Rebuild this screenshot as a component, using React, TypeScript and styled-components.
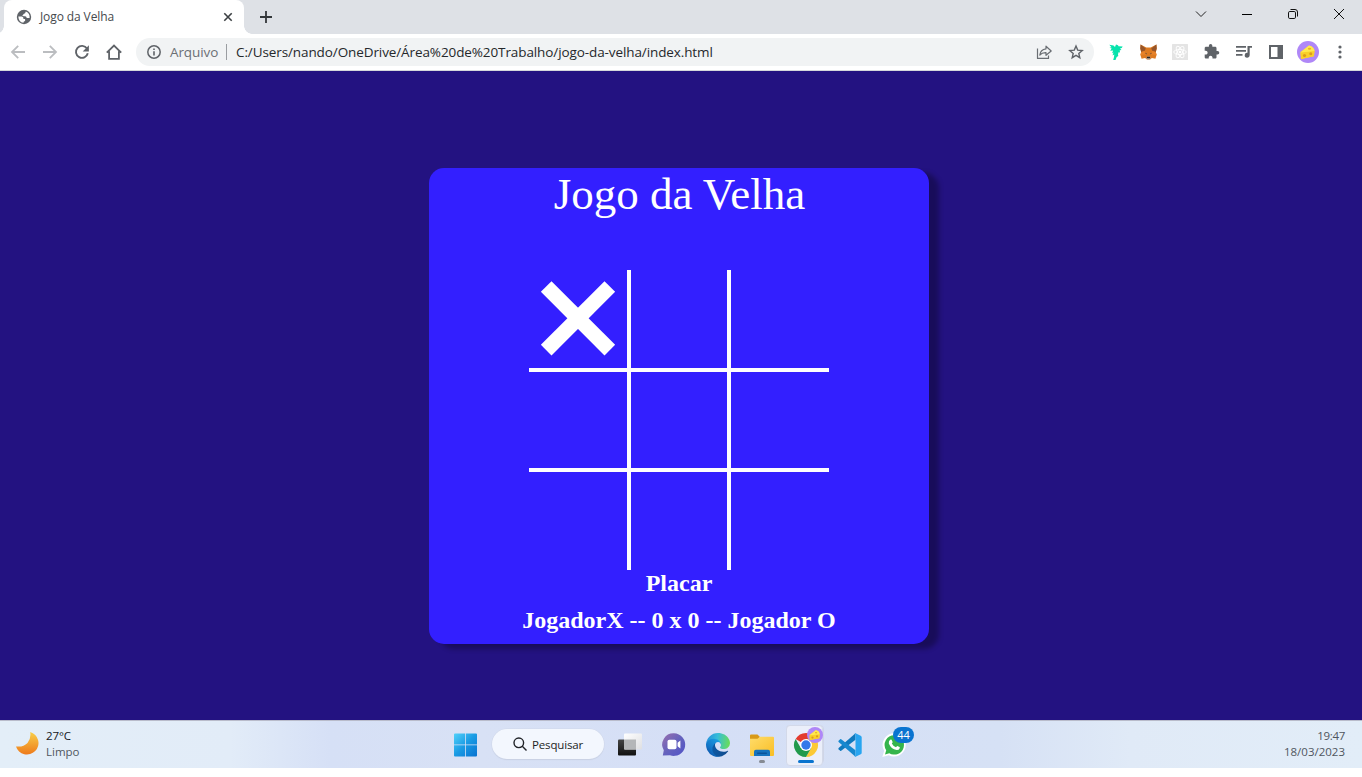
import React from "react";
import styled, { createGlobalStyle } from "styled-components";

const GlobalStyle = createGlobalStyle`
  * { box-sizing: border-box; }
  html, body { margin: 0; padding: 0; background: #fff; overflow: hidden; }
  svg { display: block; flex: none; overflow: visible; }
`;

const uiFont = `"Open Sans", "Noto Sans", sans-serif`;

const Screen = styled.div`
  width: 1362px;
  height: 777px;
  display: flex;
  flex-direction: column;
  background: #fff;
  font-family: ${uiFont};
`;

const TabStrip = styled.header`
  height: 34px;
  display: flex;
  background: #dee1e6;
  padding-left: 4px;
`;

const Tab = styled.div`
  position: relative;
  width: 240px;
  height: 34px;
  display: flex;
  align-items: center;
  padding: 0 9px 0 12px;
  background: #fff;
  border-radius: 8px 8px 0 0;
  &::before, &::after {
    content: "";
    position: absolute;
    bottom: 0;
    width: 8px;
    height: 8px;
  }
  &::before { left: -8px; background: radial-gradient(circle at 0 0, #dee1e6 7.5px, #fff 8px); }
  &::after { right: -8px; background: radial-gradient(circle at 100% 0, #dee1e6 7.5px, #fff 8px); }
`;

const TabTitle = styled.span`
  flex: 1;
  margin-left: 8px;
  font-size: 12px;
  line-height: 16px;
  letter-spacing: -0.1px;
  color: #45494d;
  white-space: nowrap;
`;

const NewTab = styled.div`
  width: 44px;
  display: flex;
  align-items: center;
  justify-content: center;
`;

const WindowButtons = styled.div`
  display: flex;
  margin-left: auto;
  height: 28px;
`;

const WindowButton = styled.div`
  width: 46px;
  display: flex;
  align-items: center;
  justify-content: center;
`;

const Toolbar = styled.div`
  height: 37px;
  display: flex;
  align-items: center;
  padding: 0 6px 0 2px;
  background: #fff;
  border-bottom: 1px solid #d5d7db;
`;

const Slot = styled.div`
  width: 32px;
  height: 32px;
  flex: none;
  display: flex;
  align-items: center;
  justify-content: center;
`;

const AddressBar = styled.div`
  flex: 1;
  height: 28px;
  margin: 0 6px;
  padding: 0 2px;
  border-radius: 14px;
  background: #f1f3f4;
  display: flex;
  align-items: center;
`;

const Scheme = styled.span`
  width: 48px;
  font-size: 13.5px;
  line-height: 20px;
  letter-spacing: -0.1px;
  color: #6b6f74;
  white-space: nowrap;
`;

const SchemeDivider = styled.i`
  width: 1px;
  height: 16px;
  margin: 0 9px 0 8px;
  background: #9a9da1;
`;

const Url = styled.span`
  flex: 1;
  font-size: 13.5px;
  line-height: 20px;
  letter-spacing: -0.1px;
  color: #25282b;
  white-space: nowrap;
`;

const Page = styled.main`
  height: 649px;
  display: flex;
  justify-content: center;
  align-items: flex-start;
  padding: 97px 4px 0 0;
  background: #231281;
`;

const Card = styled.section`
  width: 500px;
  height: 476px;
  display: flex;
  flex-direction: column;
  align-items: center;
  border-radius: 15px;
  background: #331fff;
  box-shadow: 10px 5px 5px rgba(0, 0, 0, 0.3);
  color: #fff;
  font-family: "Liberation Serif", serif;
`;

const Title = styled.h1`
  margin: 0 0 50px;
  padding-left: 1px;
  font-size: 45px;
  line-height: 52px;
  font-weight: 400;
`;

const Board = styled.div`
  display: grid;
  grid-template-columns: repeat(3, 100px);
  grid-template-rows: repeat(3, 100px);
`;

const Cell = styled.div<{ $index: number }>`
  display: flex;
  align-items: center;
  justify-content: center;
  border: 0 solid #fff;
  border-left-width: ${(p) => (p.$index % 3 > 0 ? 2 : 0)}px;
  border-right-width: ${(p) => (p.$index % 3 < 2 ? 2 : 0)}px;
  border-top-width: ${(p) => (p.$index > 2 ? 2 : 0)}px;
  border-bottom-width: ${(p) => (p.$index < 6 ? 2 : 0)}px;
`;

const Score = styled.p<{ $gap?: number }>`
  margin: ${(p) => p.$gap ?? 0}px 0 0;
  font-size: 24px;
  line-height: 27px;
  font-weight: 700;
  white-space: pre;
`;

const Taskbar = styled.footer`
  height: 48px;
  display: flex;
  align-items: stretch;
  border-top: 1px solid #b9bccb;
  background: linear-gradient(90deg, #e3eef8 0, #e2ecf8 230px, #d6e0f6 330px, #d8e1f5 480px, #d5dff6 700px, #d6e1f5 1000px, #e0eaf7 1130px, #e2edf8 100%);
`;

const Weather = styled.div`
  width: 443px;
  display: flex;
  padding: 7px 0 0 15px;
  gap: 7px;
`;

const SmallLine = styled.div<{ $color?: string; $spacing?: number }>`
  font-size: 11.5px;
  line-height: 16px;
  letter-spacing: ${(p) => p.$spacing ?? 0}px;
  color: ${(p) => p.$color ?? "#50565e"};
  white-space: nowrap;
`;

const AppSlot = styled.div`
  position: relative;
  width: 44px;
  display: flex;
  align-items: center;
  justify-content: center;
`;

const SearchPill = styled.div`
  width: 112px;
  height: 30px;
  margin: 8px 4px 0 5px;
  padding-left: 21px;
  display: flex;
  align-items: center;
  gap: 5px;
  border-radius: 15px;
  background: #f3f7fe;
  box-shadow: 0 0 0 0.5px #d0d8ea, 0 1px 1px #c3cbdf;
  font-size: 11.5px;
  letter-spacing: -0.15px;
  color: #1c1f24;
`;

const ActiveBack = styled.i`
  position: absolute;
  left: 2px;
  top: 4px;
  width: 38px;
  height: 39px;
  border-radius: 4px;
  background: #e0e6f6;
  border: 1px solid #cfd5e6;
  &::after {
    content: "";
    position: absolute;
    left: -1px;
    top: -1px;
    width: 35px;
    height: 39px;
    border-radius: 4px;
    background: #ebeffa;
    border: 1px solid #d3d9e9;
  }
`;

const Indicator = styled.i<{ $w: number; $color: string }>`
  position: absolute;
  bottom: 5px;
  left: ${(p) => (44 - p.$w) / 2}px;
  width: ${(p) => p.$w}px;
  height: 3px;
  border-radius: 2px;
  background: ${(p) => p.$color};
`;

const IconLayer = styled.div`
  position: relative;
`;

const ProfileBadge = styled.div`
  position: absolute;
  right: 5px;
  top: 6px;
`;

const CountBadge = styled.div`
  position: absolute;
  left: 21px;
  top: 6px;
  width: 21px;
  height: 16px;
  border-radius: 8px;
  background: #0a74d0;
  color: #fff;
  font-size: 11px;
  line-height: 16px;
  text-align: center;
`;

const Clock = styled.div`
  margin-left: auto;
  padding: 7px 17px 0 0;
  text-align: right;
`;

const Cheese = ({ size }: { size: number }) => (
  <svg width={size} height={size} viewBox="0 0 22 22">
    <circle cx="11" cy="11" r="11" fill="#af87f7" />
    <path d="M3.5 11 12 4.500q5 1 5.500 5.500l-.6 5.300-12.900 2.700z" fill="#fdd835" />
    <path d="m3.500 11.500 14-1.500-.6 5.300-12.900 2.700z" fill="#f9cf2a" />
    <path d="M3.500 11.500 12 4.500q5 1 5.500 5.500z" fill="#ffe94e" />
    <circle cx="7.500" cy="14.500" r="1.600" fill="#dd9c1c" />
    <circle cx="13.800" cy="12.800" r="1.500" fill="#dd9c1c" />
    <ellipse cx="12.500" cy="7.800" rx="1.600" ry="1" fill="#e9b321" />
  </svg>
);

const Globe = () => (
  <svg width="16" height="16" viewBox="0 0 16 16">
    <circle cx="8" cy="8" r="7.200" fill="#5f6368" />
    <path d="M2.300 7.400h3.400q1.700 0 1.700 1.700v.8h1.700v2.200q-1.600.2-1.700 1.700-4.700-.7-5.100-6.400z" fill="#fff" />
    <path d="M9.800 2.500q-.2 2.300-2.300 2.400-.2 1.700-1.500 1.700.6 1 3.200.7 1.400.1 1.500 1.700h2.900q.5-4.700-3.800-6.500z" fill="#fff" />
  </svg>
);

const Fox = () => (
  <svg width="17" height="16" viewBox="0 0 17 16">
    <path d="m.6.400 5.700 3h4.400l5.700-3 .3 4.200-.9 3.400.8 3-1.200 3.800-3.500-.9-1.900 1.600H7l-1.900-1.600-3.500.9L.4 11l.8-3L.3 4.600z" fill="#dd7a20" />
    <path d="m.6.400 5.200 4L4.500 7 1.200 8 .3 4.600zM16.400.400l-5.200 4L12.500 7l3.300 1 .9-3.400z" fill="#96552a" />
    <path d="m1.200 8 3.300-1 1.800 3.500L.4 11zM15.800 8l-3.300-1-1.800 3.500 5.900.5z" fill="#e8832a" />
    <path d="m4.800 8.800 1.700.4.200 1.300zM12.200 8.800l-1.700.4-.2 1.300z" fill="#4a4038" />
    <path d="M6.800 12.500h3.400l.3 2.400-.6.600H7.100l-.6-.6z" fill="#b9a79a" />
    <path d="M7 12.700h3l.2 1.500H6.800z" fill="#2b2522" />
  </svg>
);

const BackIcon = ({ flip = false }: { flip?: boolean }) => (
  <svg width="16" height="16" viewBox="0 0 16 16" fill="none" stroke="#bbbdc0" strokeWidth="1.800">
    <path d={flip ? "M1 8h12.500M7.800 1.800 14 8l-6.200 6.200" : "M15 8H2.500M8.200 1.800 2 8l6.200 6.200"} />
  </svg>
);

const XMark = () => (
  <svg width="74" height="74" viewBox="-37 -37 74 74" fill="#fff">
    <g transform="translate(0 -.700) rotate(45)">
      <rect x="-45" y="-7.500" width="90" height="15" />
      <rect x="-7.500" y="-45" width="15" height="90" />
    </g>
  </svg>
);

const WindowsLogo = () => (
  <svg width="24" height="24" viewBox="0 0 24 24">
    <defs>
      <linearGradient id="win" x1="0" y1="0" x2="24" y2="24" gradientUnits="userSpaceOnUse">
        <stop offset="0" stopColor="#55d4fb" />
        <stop offset=".5" stopColor="#1a9be4" />
        <stop offset="1" stopColor="#0871d0" />
      </linearGradient>
    </defs>
    <path d="M2 .500H12v11H1v-10q0-1 1-1zM12.800.500H23q1 0 1 1v10H12.800zM1 12.300H12v11.200H2q-1 0-1-1zM12.800 12.300H24v10.200q0 1-1 1H12.800z" fill="url(#win)" />
  </svg>
);

const TaskView = () => (
  <svg width="24" height="24" viewBox="0 0 24 24">
    <defs>
      <linearGradient id="tvd" x1="0" y1="0" x2="0" y2="1"><stop stopColor="#444" /><stop offset="1" stopColor="#111" /></linearGradient>
      <linearGradient id="tvl" x1="0" y1="0" x2="1" y2="1"><stop stopColor="#fff" /><stop offset="1" stopColor="#dedfe2" /></linearGradient>
    </defs>
    <rect x="0" y="6.500" width="18" height="16" rx="1" fill="url(#tvd)" />
    <rect x="6" y=".5" width="18" height="16" rx="1" fill="url(#tvl)" />
    <path d="M6 6.500h12v10H7q-1 0-1-1z" fill="#b4b6b8" />
  </svg>
);

const ChatIcon = () => (
  <svg width="24" height="24" viewBox="0 0 24 24">
    <defs>
      <linearGradient id="chat" x1="0" y1="0" x2="1" y2="1"><stop stopColor="#9a6fae" /><stop offset=".5" stopColor="#6563bd" /><stop offset="1" stopColor="#5153c8" /></linearGradient>
    </defs>
    <path d="M12 .300a11.300 11.300 0 1 1-4 21.900L.8 22.500l1-5.200A11.300 11.300 0 0 1 12 .300z" fill="url(#chat)" />
    <rect x="5.500" y="6.700" width="9" height="9.500" rx="1.800" fill="#fff" />
    <path d="m15.600 9.800 2.800-2.300v8l-2.800-2.300z" fill="#fff" />
  </svg>
);

const EdgeIcon = () => (
  <svg width="24" height="24" viewBox="0 0 256 256">
    <defs>
      <linearGradient id="e1" x1="63" x2="241" y1="178" y2="178" gradientUnits="userSpaceOnUse"><stop stopColor="#0c59a4" /><stop offset="1" stopColor="#114a8b" /></linearGradient>
      <linearGradient id="e2" x1="157" x2="46" y1="100" y2="220" gradientUnits="userSpaceOnUse"><stop stopColor="#1b9de2" /><stop offset=".7" stopColor="#1276c8" /><stop offset="1" stopColor="#0f5fb4" /></linearGradient>
      <linearGradient id="e3" x1="10" x2="250" y1="50" y2="90" gradientUnits="userSpaceOnUse"><stop stopColor="#2793dc" /><stop offset=".45" stopColor="#36bdd9" /><stop offset="1" stopColor="#68dc5b" /></linearGradient>
    </defs>
    <path d="M231 190a94 94 0 0 1-10.500 4.700 102 102 0 0 1-36 6.500c-47.500 0-88.800-32.700-88.800-74.600a31.500 31.500 0 0 1 16.500-27.300c-43 1.800-54 46.500-54 72.700 0 74.100 68.300 81.600 83 81.600 8 0 20-2.300 27-4.600l1.400-.4a128 128 0 0 0 66.600-52.800 4 4 0 0 0-5.200-5.800z" fill="url(#e1)" />
    <path d="M105.700 241.400a79 79 0 0 1-22.700-21.300 80.700 80.700 0 0 1 29.200-120.800c3.100-1.500 8.500-4.100 15.600-4a32.400 32.400 0 0 1 25.700 13 31.900 31.900 0 0 1 6.300 18.700c0-.2 24.500-79.600-80-79.600C36 47.400 0 89.100 0 125.600a130 130 0 0 0 12.100 56 128 128 0 0 0 156.400 67.100 75.500 75.500 0 0 1-62.800-7.300z" fill="url(#e2)" />
    <path d="M152.300 148.900c-.8 1-3.300 2.500-3.300 5.700 0 2.600 1.700 5.200 4.800 7.300 14.400 10.100 41.700 8.700 41.800 8.700a60 60 0 0 0 30.500-8.400A61.800 61.800 0 0 0 256 109.500c.3-22.400-8-37.300-11.300-43.900C223.500 24.100 177.700.3 128 .3A128 128 0 0 0 0 126.500c.5-36.500 36.800-66 80-66 3.500 0 23.500.3 42 10a72.600 72.600 0 0 1 30.900 29.300c6.100 10.600 7.200 24.100 7.200 29.500s-2.700 13.300-7.800 19.600z" fill="url(#e3)" />
  </svg>
);

const FolderIcon = () => (
  <svg width="26" height="24" viewBox="0 0 26 24">
    <defs>
      <linearGradient id="fold" x1="0" y1="0" x2="1" y2="1"><stop stopColor="#ffdc6a" /><stop offset="1" stopColor="#f9be25" /></linearGradient>
    </defs>
    <path d="M1 2.500q0-1 1-1h6.500l2.500 2.500h-.5v4H1z" fill="#d99a17" />
    <path d="M1 5.800h7.500L11 3.800h13q1 0 1 1V22q0 1-1 1H2q-1 0-1-1z" fill="url(#fold)" />
    <path d="M5 23v-4.500q0-1.800 1.800-1.800h12.400q1.800 0 1.800 1.800V23z" fill="#1673be" />
    <rect x="8" y="19.500" width="10" height="1.500" rx=".7" fill="#0b549a" />
  </svg>
);

const ChromeIcon = () => (
  <svg width="24" height="24" viewBox="0 0 24 24">
    <path d="M12 12 1.600 6A12 12 0 0 1 22.400 6H12z" fill="#e33b2e" />
    <path d="M12 6h10.400A12 12 0 0 1 12 24l5.200-9z" fill="#fcc934" />
    <path d="M1.600 6A12 12 0 0 0 12 24l5.200-9H6.800z" fill="#229a4c" />
    <circle cx="12" cy="12" r="6" fill="#fff" />
    <circle cx="12" cy="12" r="4.700" fill="#3478ea" />
  </svg>
);

const CodeIcon = () => (
  <svg width="24" height="24" viewBox="0 0 24 24">
    <path d="M17.500.300v6.500L3.200 17.700q-.6.400-1.100 0l-1.500-1.400q-.6-.6 0-1.200z" fill="#1079bd" />
    <path d="M17.500 23.700v-6.500L3.200 6.300q-.6-.4-1.100 0L.600 7.700q-.6.600 0 1.200z" fill="#1688cf" />
    <path d="m17.500.300 5.200 2.400q1 .5 1 1.500v15.600q0 1-1 1.500l-5.200 2.400q-.9.300-1.500-.4 1.200.8 1.500-1V1.700q-.3-1.800-1.500-1 .600-.700 1.500-.400z" fill="#28a5f0" />
  </svg>
);

const WhatsAppIcon = () => (
  <svg width="24" height="24" viewBox="0 0 24 24">
    <path d="M12.300.300a11.600 11.600 0 1 1-5.500 21.900L.300 24l1.900-6.300A11.600 11.600 0 0 1 12.300.300z" fill="#fff" />
    <path d="M12.300 2.200a9.700 9.700 0 1 1-5 18L3 21.400l1.200-4.200a9.700 9.700 0 0 1 8.100-15z" fill="#36b54c" />
    <path d="M8.600 6.500q.7-.3 1 .2l1 2.200q.1.600-.8 1.500 1.500 2.800 4.200 3.800.8-1 1.200-1.300l2.400 1.100q.4.300.1 1.200-.8 2-3 1.900-5.700-1-7.900-6.500-.4-3 1.800-4.100z" fill="#fff" />
  </svg>
);

export default function App() {
  return (
    <Screen>
      <GlobalStyle />
      <TabStrip>
        <Tab>
          <Globe />
          <TabTitle>Jogo da Velha</TabTitle>
          <svg width="14" height="15" viewBox="0 0 14 15" stroke="#3c4043" strokeWidth="1.600">
            <path d="m3.300 3.300 7.400 7.400m0-7.400-7.400 7.400" />
          </svg>
        </Tab>
        <NewTab>
          <svg width="12" height="12" viewBox="0 0 12 12" stroke="#33373a" strokeWidth="1.800">
            <path d="M6 0v12M0 6h12" />
          </svg>
        </NewTab>
        <WindowButtons>
          <WindowButton>
            <svg width="10" height="6" viewBox="0 0 10 6" fill="none" stroke="#222"><path d="m0 .500 5 5 5-5" /></svg>
          </WindowButton>
          <WindowButton>
            <svg width="10" height="1" viewBox="0 0 10 1"><rect width="10" height="1" fill="#000" /></svg>
          </WindowButton>
          <WindowButton>
            <svg width="10" height="10" viewBox="0 0 10 10" fill="none" stroke="#111">
              <rect x=".5" y="2.500" width="7" height="7" rx="1.300" />
              <path d="M2.500.500H7q2.500 0 2.500 2.500v4.500" />
            </svg>
          </WindowButton>
          <WindowButton>
            <svg width="10" height="10" viewBox="0 0 10 10" stroke="#111"><path d="m0 0 10 10M10 0 0 10" /></svg>
          </WindowButton>
        </WindowButtons>
      </TabStrip>

      <Toolbar>
        <Slot><BackIcon /></Slot>
        <Slot><BackIcon flip /></Slot>
        <Slot>
          <svg width="16" height="16" viewBox="0 0 16 16">
            <path d="M13 4.600A6 6 0 1 0 13.800 9.300" fill="none" stroke="#5f6368" strokeWidth="1.900" />
            <path d="M14.900 1.200v6.200H8.700z" fill="#5f6368" />
          </svg>
        </Slot>
        <Slot>
          <svg width="18" height="18" viewBox="0 0 18 18" fill="none" stroke="#5f6368" strokeWidth="1.800">
            <path d="M1.800 9.700 9 2.500l7.200 7.200M4.100 8.200v7.700h9.800V8.200" />
          </svg>
        </Slot>
        <AddressBar>
          <Slot>
            <svg width="14" height="14" viewBox="0 0 14 14">
              <circle cx="7" cy="7" r="6.200" fill="none" stroke="#5f6368" strokeWidth="1.500" />
              <path d="M6.200 6.200h1.600v4.300H6.200zM6.200 3.500h1.600v1.500H6.200z" fill="#5f6368" />
            </svg>
          </Slot>
          <Scheme>Arquivo</Scheme>
          <SchemeDivider />
          <Url>C:/Users/nando/OneDrive/Área%20de%20Trabalho/jogo-da-velha/index.html</Url>
          <Slot>
            <svg width="16" height="16" viewBox="0 0 16 16" fill="none" stroke="#6a6e73" strokeWidth="1.200" strokeLinejoin="round">
              <path d="M1.500 4.500V14.400h11v-3" />
              <path d="M10 2.200 15.200 7 10 11.300V8.700Q6 8.500 3.800 11 4.500 5.300 10 4.800z" />
            </svg>
          </Slot>
          <Slot>
            <svg width="16" height="16" viewBox="0 0 16 16" fill="none" stroke="#5f6368" strokeWidth="1.400">
              <path d="m8 2 1.700 4.100 4.500.4-3.400 2.900 1 4.300L8 11.400l-3.800 2.300 1-4.300-3.400-2.900 4.500-.4z" />
            </svg>
          </Slot>
        </AddressBar>
        <Slot>
          <svg width="16" height="16" viewBox="0 0 16 16" fill="#06e3ac">
            <path d="M1.300.700 5.500 1.500 7 3 8 .500l2 .8.5 1 4.200.2-1 1.500-1.700.4 1.500 1.600-1.800.3.300 2.200-1.500-.2-.5 2.200.3 1.500-1.600 1-1.200 3H5.200l.8-3 .3-2.500-1.800 1 1-3-1.500.8 1.200-2.800-3 .3 1.500-2.300-2.200-.7 2-.6z" />
          </svg>
        </Slot>
        <Slot><Fox /></Slot>
        <Slot>
          <svg width="16" height="16" viewBox="0 0 16 16">
            <rect width="16" height="16" rx=".5" fill="#e4e4e4" />
            <g fill="none" stroke="#fff" strokeWidth=".9">
              <ellipse cx="8" cy="8" rx="6.300" ry="2.500" />
              <ellipse cx="8" cy="8" rx="6.300" ry="2.500" transform="rotate(60 8 8)" />
              <ellipse cx="8" cy="8" rx="6.300" ry="2.500" transform="rotate(120 8 8)" />
            </g>
            <circle cx="8" cy="8" r="1.300" fill="#fff" />
          </svg>
        </Slot>
        <Slot>
          <svg width="16" height="16" viewBox="1 1 23 23" fill="#5f6368">
            <path d="M20.500 11H19V7c0-1.100-.9-2-2-2h-4V3.500a2.500 2.500 0 0 0-5 0V5H4c-1.100 0-1.990.9-1.990 2v3.800H3.500c1.490 0 2.700 1.210 2.700 2.700s-1.210 2.700-2.700 2.700H2V20c0 1.100.9 2 2 2h3.800v-1.500c0-1.490 1.210-2.700 2.700-2.700 1.490 0 2.700 1.210 2.700 2.700V22H17c1.100 0 2-.9 2-2v-4h1.500a2.500 2.500 0 0 0 0-5z" />
          </svg>
        </Slot>
        <Slot>
          <svg width="16" height="14" viewBox="0 0 16 14" fill="#5f6368">
            <path d="M0 1h10v1.700H0zM0 5h10v1.700H0zM0 9h6.500v1.700H0zM11.500 1H16v1.800h-2.300v7.500a2.500 2.500 0 1 1-2.200-2.500z" />
          </svg>
        </Slot>
        <Slot>
          <svg width="14" height="14" viewBox="0 0 14 14">
            <path d="M0 0h14v14H0zM2 2v10h6.500V2z" fill="#5f6368" fillRule="evenodd" />
          </svg>
        </Slot>
        <Slot><Cheese size={22} /></Slot>
        <Slot>
          <svg width="4" height="14" viewBox="0 0 4 14" fill="#5f6368">
            <circle cx="2" cy="2" r="1.600" /><circle cx="2" cy="7" r="1.600" /><circle cx="2" cy="12" r="1.600" />
          </svg>
        </Slot>
      </Toolbar>

      <Page>
        <Card>
          <Title>Jogo da Velha</Title>
          <Board>
            {Array.from({ length: 9 }, (_, i) => (
              <Cell key={i} $index={i}>{i === 0 && <XMark />}</Cell>
            ))}
          </Board>
          <Score>Placar</Score>
          <Score $gap={10}>JogadorX -- 0 x 0 -- Jogador O</Score>
        </Card>
      </Page>

      <Taskbar>
        <Weather>
          <svg width="24" height="26" viewBox="0 0 24 26">
            <defs>
              <linearGradient id="moon" x1="0" y1="0" x2="0" y2="1"><stop stopColor="#f8cf4a" /><stop offset="1" stopColor="#ee7a1b" /></linearGradient>
            </defs>
            <path d="M15.200 4A11.500 11.500 0 1 1 1 18.400Q8 19.500 12.500 15 16.300 10.500 15.200 4z" fill="url(#moon)" />
          </svg>
          <div>
            <SmallLine $color="#15181c" $spacing={-0.1}>27°C</SmallLine>
            <SmallLine>Limpo</SmallLine>
          </div>
        </Weather>
        <AppSlot><WindowsLogo /></AppSlot>
        <SearchPill>
          <svg width="14" height="14" viewBox="0 0 14 14" fill="none" stroke="#202328" strokeWidth="1.400">
            <circle cx="5.800" cy="5.800" r="4.800" /><path d="m9.300 9.300 4.200 4.200" />
          </svg>
          Pesquisar
        </SearchPill>
        <AppSlot><TaskView /></AppSlot>
        <AppSlot><ChatIcon /></AppSlot>
        <AppSlot><EdgeIcon /></AppSlot>
        <AppSlot><FolderIcon /><Indicator $w={6} $color="#868b94" /></AppSlot>
        <AppSlot>
          <ActiveBack />
          <IconLayer><ChromeIcon /></IconLayer>
          <ProfileBadge><Cheese size={16} /></ProfileBadge>
          <Indicator $w={16} $color="#0a74cf" />
        </AppSlot>
        <AppSlot><CodeIcon /></AppSlot>
        <AppSlot><WhatsAppIcon /><CountBadge>44</CountBadge></AppSlot>
        <Clock>
          <SmallLine $spacing={-0.3}>19:47</SmallLine>
          <SmallLine>18/03/2023</SmallLine>
        </Clock>
      </Taskbar>
    </Screen>
  );
}
